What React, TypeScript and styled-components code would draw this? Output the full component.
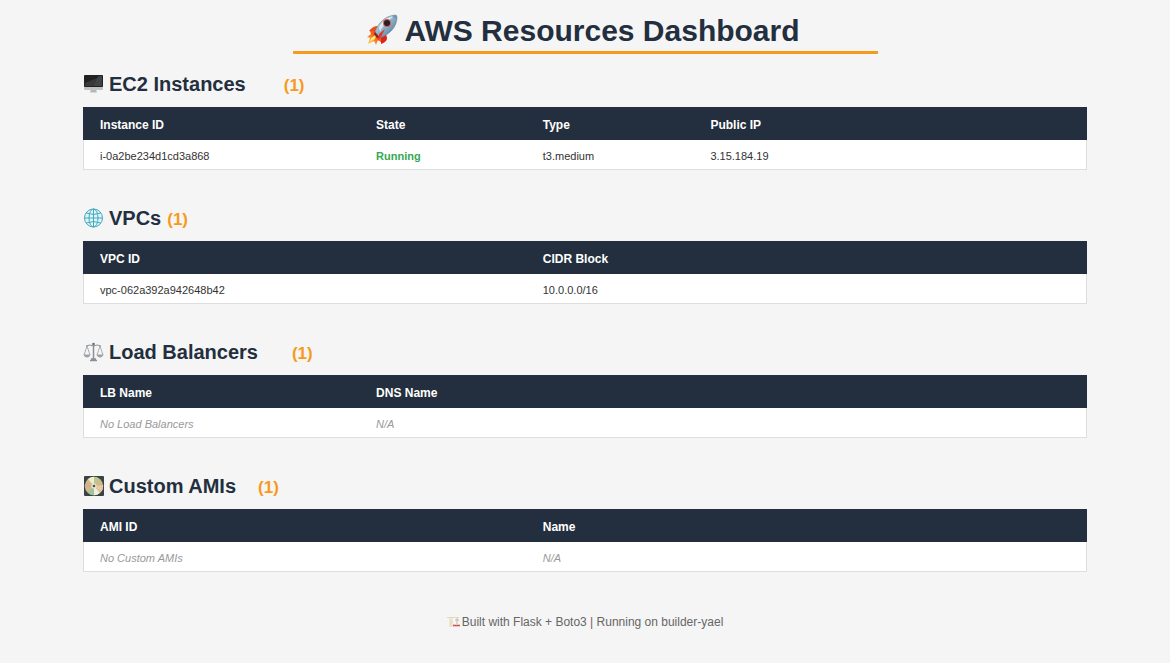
import React from "react";
import styled, { createGlobalStyle } from "styled-components";

const GlobalStyle = createGlobalStyle`
  * { box-sizing: border-box; }
  body {
    margin: 0;
    background: #f5f5f5;
    color: #333;
    font-family: Arial, "Liberation Sans", sans-serif;
  }
`;

const Page = styled.main`
  display: flex;
  flex-direction: column;
  padding: 12px 83px 32px;
`;

const Title = styled.h1`
  display: flex;
  align-items: center;
  justify-content: center;
  gap: 5px;
  align-self: center;
  width: 50vw;
  height: 42px;
  margin: 0;
  padding: 0 4px 2px 0;
  border-bottom: 3px solid #f79a1c;
  border-radius: 1px;
  color: #232f3e;
  font-size: 30px;
  line-height: 36px;
  white-space: nowrap;
`;

const Section = styled.section`
  padding-top: 17px;
  margin-bottom: 18px;
`;

const Heading = styled.h2`
  display: flex;
  align-items: center;
  height: 26px;
  margin: 0 0 10px;
  color: #232f3e;
  font-size: 20px;
  line-height: 26px;
`;

const HeadingText = styled.span`
  margin-left: 5px;
`;

const Count = styled.span<{ $gap: number }>`
  margin-left: ${(p) => p.$gap}px;
  padding-top: 4px;
  color: #f79a1c;
  font-size: 17px;
  line-height: 24px;
`;

const Table = styled.table`
  width: 100%;
  table-layout: fixed;
  border-spacing: 0;
  background: #fff;
`;

const HeadCell = styled.th<{ $width: string }>`
  width: ${(p) => p.$width};
  height: 33px;
  padding: 2px 17px 0;
  background: #232f3e;
  color: #fff;
  font-size: 12px;
  line-height: 16px;
  text-align: left;
`;

type Tone = "plain" | "running" | "empty";

const Cell = styled.td<{ $tone: Tone }>`
  height: 30px;
  padding: 2px 17px 0;
  border-bottom: 1px solid #dedede;
  color: ${(p) => ({ plain: "#333", running: "#36a852", empty: "#999" })[p.$tone]};
  font-size: 11px;
  font-style: ${(p) => (p.$tone === "empty" ? "italic" : "normal")};
  font-weight: ${(p) => (p.$tone === "running" ? 700 : 400)};
  line-height: 16px;

  &:first-child { border-left: 1px solid #dedede; padding-left: 16px; }
  &:last-child { border-right: 1px solid #dedede; }
`;

const Footer = styled.footer`
  display: flex;
  align-items: center;
  justify-content: center;
  gap: 2px;
  margin-top: 23px;
  color: #666;
  font-size: 12px;
  line-height: 18px;
`;

const Icon = styled.svg`
  display: block;
  flex: none;
`;

const Rocket = () => (
  <Icon width="33" height="33" viewBox="0 0 33 33" aria-hidden="true">
    <defs>
      <linearGradient id="hull" x1="0" y1="0" x2="1" y2="1">
        <stop offset="0" stopColor="#d9e8f0" />
        <stop offset=".45" stopColor="#8fb9d3" />
        <stop offset="1" stopColor="#3f6480" />
      </linearGradient>
      <linearGradient id="flame" x1="1" y1="0" x2="0" y2="1">
        <stop offset="0" stopColor="#e02a18" />
        <stop offset=".5" stopColor="#f56a1c" />
        <stop offset="1" stopColor="#ffe45a" />
      </linearGradient>
    </defs>
    <path d="M12 12 C8 12 5 14 3 17 L9 18 Z" fill="#ef4a20" />
    <path d="M4 17 L11 16 L17 24 L16 29 L12 26 L10 31 L8 27 L2 30 L4 24 L1 23 L5 20 Z" fill="url(#flame)" />
    <path d="M5 24 L10 21 L9 25 L4 28 Z" fill="#fff07a" />
    <path d="M20 20 L21 24 C21 27 18 29 15 30 L15 23 Z" fill="#dc2419" />
    <path d="M9 18 C12 9 19 2 29 1 Q31 1 31 3 C31 13 24 20 14 24 Z" fill="url(#hull)" stroke="#6d8290" strokeWidth=".6" />
    <path d="M13 13 C17 6 22 3 28 2 C22 7 17 11 14 18 Z" fill="#f3f6f7" opacity=".75" />
    <path d="M9 18 L14 24 L11 24 L8 20 Z" fill="#8d211c" />
    <path d="M13 20 L19 15 L15 23 L12 27 Z" fill="#ed3324" />
    <circle cx="21" cy="9" r="4" fill="#e45548" />
    <circle cx="21" cy="9" r="3" fill="#261f29" />
    <path d="M26 2 L31 6 L31 2 L29 1 Z" fill="#7796aa" />
  </Icon>
);

const Monitor = () => (
  <Icon width="21" height="20" viewBox="0 0 21 20" aria-hidden="true">
    <path d="M8 15 H13 L14 19 H7 Z" fill="#b8b8b8" />
    <path d="M7 18 H14 V19 H7 Z" fill="#d8d8d8" />
    <rect x="1" y="1" width="19" height="15" rx="1" fill="#c2c2c2" />
    <rect x="1" y="1" width="19" height="12" rx="1" fill="#202123" />
    <path d="M2 9 L19 2 V12 H2 Z" fill="#38393b" />
    <path d="M11 12 L15 2 H19 V12 Z" fill="#4a4b4d" opacity=".6" />
  </Icon>
);

const Globe = () => (
  <Icon width="21" height="20" viewBox="0 0 21 20" aria-hidden="true">
    <g fill="#e0f5f8" stroke="#43a9bd" strokeWidth="1">
      <circle cx="10.5" cy="10" r="9" />
      <ellipse cx="10.5" cy="10" rx="4.5" ry="9" />
      <path d="M10.5 1 V19 M1.5 10 H19.5 M3.2 5 Q10.5 8 17.8 5 M3.2 15 Q10.5 12 17.8 15" fill="none" />
    </g>
  </Icon>
);

const Scales = () => (
  <Icon width="21" height="20" viewBox="0 0 21 20" aria-hidden="true">
    <g fill="none" stroke="#8b9096" strokeWidth="1">
      <path d="M10.5 1 V17" strokeWidth="1.5" />
      <path d="M3 4 Q7 2 10.5 4 Q14 2 18 4" />
      <path d="M4 4 L1 13 M4 4 L7 13 M17 4 L14 13 M17 4 L20 13" strokeWidth=".7" />
      <path d="M7 18.5 H14 M8 17 H13" strokeWidth="1.4" />
    </g>
    <path d="M.5 12.5 H7.5 Q6.5 15.5 4 15.5 T.5 12.5 Z M13.5 12.5 H20.5 Q19.5 15.5 17 15.5 T13.5 12.5 Z" fill="#9ca1a6" />
    <circle cx="10.5" cy="2" r="1.3" fill="#6f757b" />
  </Icon>
);

const Disc = () => (
  <Icon width="21" height="20" viewBox="0 0 21 20" aria-hidden="true">
    <rect x="1" y="0" width="20" height="20" rx="1" fill="#394247" />
    <circle cx="11" cy="10" r="9.2" fill="#cbbd87" />
    <path d="M11 10 L5 3 A9.2 9.2 0 0 1 11 .8 Z" fill="#f4eccb" />
    <path d="M11 10 L11 .8 A9.2 9.2 0 0 1 16 2.4 Z" fill="#b4c991" />
    <path d="M11 10 L20.2 9 A9.2 9.2 0 0 1 18 16 Z" fill="#e9c7a7" />
    <path d="M11 10 L17 17 A9.2 9.2 0 0 1 11 19.2 Z" fill="#f0efd8" />
    <path d="M11 10 L11 19.2 A9.2 9.2 0 0 1 5 17 Z" fill="#9fc3a1" />
    <path d="M11 10 L2 12 A9.2 9.2 0 0 1 2 8 Z" fill="#dfa994" />
    <circle cx="11" cy="10" r="2.6" fill="#e9e6d8" />
    <circle cx="11" cy="10" r="1.3" fill="#4e5147" />
  </Icon>
);

const Crane = () => (
  <Icon width="13" height="14" viewBox="0 0 13 14" aria-hidden="true">
    <path d="M3 2 V12 M5 2 V12 M0 2.5 H12 M3 5 L5 7 L3 9 L5 11" fill="none" stroke="#e6d8b4" strokeWidth="1" />
    <path d="M10 3 V9" stroke="#b9a9a0" strokeWidth=".8" />
    <path d="M8 5 H12" stroke="#d8b0a4" strokeWidth="1" />
    <path d="M6 10.5 H13" stroke="#c85757" strokeWidth="1.6" />
  </Icon>
);

interface Column {
  label: string;
  width: string;
  value: string;
  tone?: Tone;
}

interface Resource {
  title: string;
  icon: React.ReactNode;
  gap: number;
  columns: Column[];
}

const resources: Resource[] = [
  {
    title: "EC2 Instances",
    icon: <Monitor />,
    gap: 38,
    columns: [
      { label: "Instance ID", width: "27.5%", value: "i-0a2be234d1cd3a868" },
      { label: "State", width: "16.6%", value: "Running", tone: "running" },
      { label: "Type", width: "16.7%", value: "t3.medium" },
      { label: "Public IP", width: "39.2%", value: "3.15.184.19" },
    ],
  },
  {
    title: "VPCs",
    icon: <Globe />,
    gap: 6,
    columns: [
      { label: "VPC ID", width: "44.1%", value: "vpc-062a392a942648b42" },
      { label: "CIDR Block", width: "55.9%", value: "10.0.0.0/16" },
    ],
  },
  {
    title: "Load Balancers",
    icon: <Scales />,
    gap: 34,
    columns: [
      { label: "LB Name", width: "27.5%", value: "No Load Balancers", tone: "empty" },
      { label: "DNS Name", width: "72.5%", value: "N/A", tone: "empty" },
    ],
  },
  {
    title: "Custom AMIs",
    icon: <Disc />,
    gap: 22,
    columns: [
      { label: "AMI ID", width: "44.1%", value: "No Custom AMIs", tone: "empty" },
      { label: "Name", width: "55.9%", value: "N/A", tone: "empty" },
    ],
  },
];

export default function App() {
  return (
    <>
      <GlobalStyle />
      <Page>
        <Title>
          <Rocket />
          <span>AWS Resources Dashboard</span>
        </Title>
        {resources.map((r) => (
          <Section key={r.title}>
            <Heading>
              {r.icon}
              <HeadingText>{r.title}</HeadingText>
              <Count $gap={r.gap}>(1)</Count>
            </Heading>
            <Table aria-label={r.title}>
              <thead>
                <tr>
                  {r.columns.map((c) => (
                    <HeadCell key={c.label} scope="col" $width={c.width}>{c.label}</HeadCell>
                  ))}
                </tr>
              </thead>
              <tbody>
                <tr>
                  {r.columns.map((c) => (
                    <Cell key={c.label} $tone={c.tone ?? "plain"}>{c.value}</Cell>
                  ))}
                </tr>
              </tbody>
            </Table>
          </Section>
        ))}
        <Footer>
          <Crane />
          <span>Built with Flask + Boto3 | Running on builder-yael</span>
        </Footer>
      </Page>
    </>
  );
}
